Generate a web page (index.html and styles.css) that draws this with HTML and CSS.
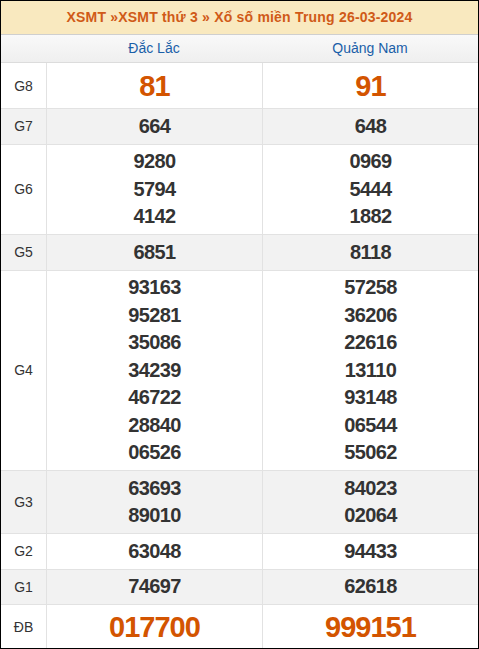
FILE: index.html
```html
<!DOCTYPE html>
<html lang="vi">
<head>
<meta charset="utf-8">
<title>XSMT thứ 3 - 26-03-2024</title>
<link rel="stylesheet" href="styles.css">
</head>
<body>
<div class="box">
  <div class="title">XSMT »XSMT thứ 3 » Xổ số miền Trung 26-03-2024</div>
  <div class="grid">
    <div class="hd lbl"></div>
    <div class="hd">Đắc Lắc</div>
    <div class="hd">Quảng Nam</div>

    <div class="lbl">G8</div>
    <div class="num big">81</div>
    <div class="num big">91</div>

    <div class="lbl alt">G7</div>
    <div class="num alt">664</div>
    <div class="num alt">648</div>

    <div class="lbl">G6</div>
    <div class="num">9280<br>5794<br>4142</div>
    <div class="num">0969<br>5444<br>1882</div>

    <div class="lbl alt">G5</div>
    <div class="num alt">6851</div>
    <div class="num alt">8118</div>

    <div class="lbl">G4</div>
    <div class="num">93163<br>95281<br>35086<br>34239<br>46722<br>28840<br>06526</div>
    <div class="num">57258<br>36206<br>22616<br>13110<br>93148<br>06544<br>55062</div>

    <div class="lbl alt">G3</div>
    <div class="num alt">63693<br>89010</div>
    <div class="num alt">84023<br>02064</div>

    <div class="lbl">G2</div>
    <div class="num">63048</div>
    <div class="num">94433</div>

    <div class="lbl alt">G1</div>
    <div class="num alt">74697</div>
    <div class="num alt">62618</div>

    <div class="lbl last">ĐB</div>
    <div class="num big db">017700</div>
    <div class="num big db">999151</div>
  </div>
</div>
</body>
</html>
```
FILE: styles.css
```css
* { box-sizing: border-box; }
html, body { margin: 0; padding: 0; background: #fff; }
body { font-family: "Liberation Sans", Arial, sans-serif; color: #333; }

.box {
  width: 479px;
  height: 649px;
  border: 1px solid #000;
  overflow: hidden;
}

.title {
  height: 34px;
  background: #f9e9bf;
  border-bottom: 1px solid #cfcfcf;
  color: #d05a18;
  font-weight: bold;
  font-size: 14px;
  letter-spacing: 0.2px;
  line-height: 33px;
  text-align: center;
}

.grid {
  display: grid;
  grid-template-columns: 45px 216px 216px;
}

.grid > div {
  border-bottom: 1px solid #e2e2e2;
  text-align: center;
}

.grid > .num { border-left: 1px solid #e2e2e2; }

.hd {
  height: 28px;
  line-height: 27px;
  background: linear-gradient(#f9f9f9, #efefef);
  color: #1a5fa8;
  font-size: 14px;
}
.grid > .hd { border-left: 0; border-bottom-color: #dcdcdc; }

.lbl {
  display: flex;
  align-items: center;
  justify-content: center;
  font-size: 14px;
  color: #333;
}

.num {
  padding: 3.5px 0;
  font-size: 20px;
  letter-spacing: -0.6px;
  font-weight: bold;
  line-height: 27.5px;
  color: #333;
}

.num.big {
  font-size: 29px;
  letter-spacing: -1px;
  line-height: 38px;
  color: #d35400;
}
.num.db { line-height: 36px; }

.alt { background: #f2f2f2; }
```
